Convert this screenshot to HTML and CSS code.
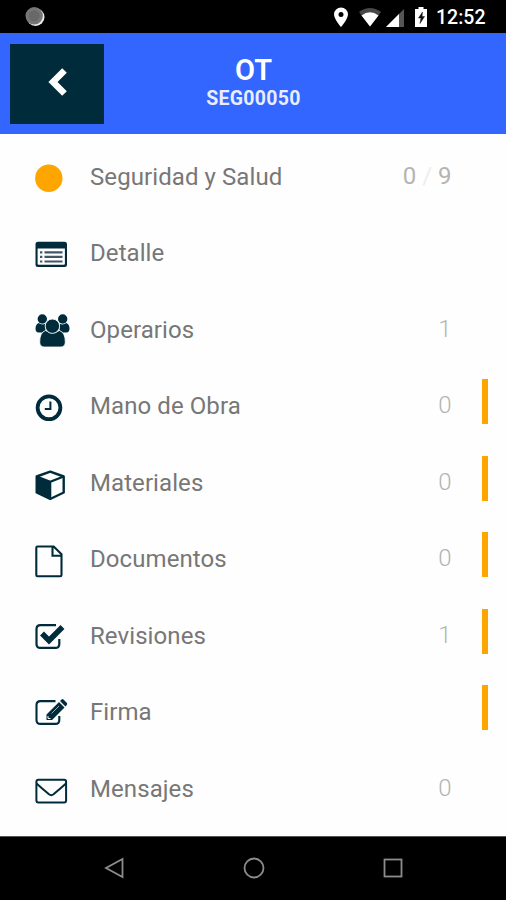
FILE: index.html
```html
<!DOCTYPE html>
<html lang="es">
<head>
    <meta charset="UTF-8">
    <meta name="viewport" content="width=device-width, initial-scale=1.0">
    <title>OT SEG00050</title>
    <link rel="stylesheet" href="styles.css">
</head>
<body>
    <div class="statusbar">
        <svg class="recording" width="22" height="22" viewBox="0 0 22 22">
            <circle cx="11.5" cy="11" r="9" fill="#eee"/>
            <circle cx="10.2" cy="9.8" r="8.7" fill="#777"/>
            <circle cx="10.2" cy="9.8" r="5.5" fill="#686868"/>
        </svg>
        <svg class="signals" width="98" height="24" viewBox="0 0 98 24">
            <path d="M8 2.5a7 7 0 0 0-7 7C1 14 8 22 8 22s7-8 7-12.500a7 7 0 0 0-7-7zm0 4.500a2.500 2.500 0 1 1 0 5 2.500 2.500 0 0 1 0-5z" fill="#fff"/>
            <path d="M26 7Q37-1 48 7L37 21.500z" fill="#484848"/>
            <path d="M28.500 10.500Q37 4 45.500 10.500L37 21.500z" fill="#fff"/>
            <path d="M71 4v18H53z" fill="#555"/>
            <path d="M66 9v13H53z" fill="#fff"/>
            <path d="M85.500 2h5v2h3.500v18H82V4h3.500z" fill="#fff"/>
            <path d="M89.500 7l-4 6h2.500l-1 5.500 4.500-7H89z" fill="#111" stroke="#111" stroke-width=".5"/>
        </svg>
        <span class="hora">12:52</span>
    </div>

    <header class="header">
        <button class="volver" aria-label="Volver">
            <svg width="24" height="32" viewBox="0 0 24 32">
                <path d="M19.500 4.500L8 16l11.500 11.500" fill="none" stroke="#fff" stroke-width="6.500"/>
            </svg>
        </button>
        <div class="titulo">
            <h1>OT</h1>
            <h2>SEG00050</h2>
        </div>
    </header>

    <main class="menu">
        <div class="fila">
            <svg class="icono" viewBox="0 0 36 40"><circle cx="13.800" cy="21.200" r="13.700" fill="#ffa500"/></svg>
            <span class="nombre">Seguridad y Salud</span>
            <span class="cantidad fuerte">0 <i>/</i> 9</span>
            <span class="marca"></span>
        </div>
        <div class="fila">
            <svg class="icono" viewBox="0 0 36 40">
                <path d="M3 7.800h26.500a2.500 2.500 0 0 1 2.500 2.500v20.200a2.500 2.500 0 0 1-2.500 2.500H3A2.500 2.500 0 0 1 .5 30.500V10.300A2.500 2.500 0 0 1 3 7.800zM2.600 14.500v15.200q0 1 1 1h25.300q1 0 1-1V14.500z" fill-rule="evenodd"/>
                <path d="M5 18.300h2.300M5 22.900h2.300M5 27.500h2.300M9.500 18.300h18M9.500 22.900h18M9.500 27.500h18" class="linea"/>
            </svg>
            <span class="nombre">Detalle</span>
            <span class="cantidad"></span>
            <span class="marca"></span>
        </div>
        <div class="fila">
            <svg class="icono" viewBox="0 0 36 40">
                <circle cx="7.300" cy="9" r="4.700"/>
                <circle cx="27.700" cy="9" r="4.700"/>
                <path d="M3.500 13q3.800 2.500 7 .5v7l-3 2H3Q.5 22 .5 18.500q0-4 3-5.500zM31.500 13q-3.800 2.500-7 .5v7l3 2H32q2.500-.5 2.500-4 0-4-3-5.500z"/>
                <path d="M10.500 20.500q7 4.500 14 0 5.800 2 5.800 11.500 0 5-4.800 5h-16q-4.800 0-4.800-5 0-9.500 5.800-11.500z" stroke="#fff" stroke-width=".8"/>
                <circle cx="17.400" cy="16.200" r="7.200" stroke="#fff" stroke-width=".9"/>
            </svg>
            <span class="nombre">Operarios</span>
            <span class="cantidad">1</span>
            <span class="marca"></span>
        </div>
        <div class="fila">
            <svg class="icono" viewBox="0 0 36 40">
                <circle cx="14" cy="20.800" r="11.400" class="trazo" stroke-width="3.800"/>
                <path d="M15.400 14.500v7.500H9.800" class="trazo" stroke-width="2"/>
            </svg>
            <span class="nombre">Mano de Obra</span>
            <span class="cantidad">0</span>
            <span class="marca activa"></span>
        </div>
        <div class="fila">
            <svg class="icono" viewBox="0 0 36 40">
                <path d="M15.200 8.600L28.700 13.500v16L15.200 36 1.700 29.500v-16z" class="trazo" stroke-width="2.400" stroke-linejoin="round"/>
                <path d="M1.700 13.500l13.500 5.200V36L1.700 29.500z"/>
                <path d="M1.700 13.500l13.500 5.200 13.500-5.200M15.200 18.700V36" class="trazo" stroke-width="2.200"/>
            </svg>
            <span class="nombre">Materiales</span>
            <span class="cantidad">0</span>
            <span class="marca activa"></span>
        </div>
        <div class="fila">
            <svg class="icono" viewBox="0 0 36 40">
                <path d="M2.500 6.500h16.200l7.800 7.800V35q0 1.300-1.300 1.300H2.500q-1.200 0-1.200-1.300V7.800q0-1.300 1.200-1.300zM17.500 6.500v9.300h9" class="trazo" stroke-width="2.100"/>
            </svg>
            <span class="nombre">Documentos</span>
            <span class="cantidad">0</span>
            <span class="marca activa"></span>
        </div>
        <div class="fila">
            <svg class="icono" viewBox="0 0 36 40">
                <path d="M21 9.100H5.500q-4 0-4 4v14.800q0 4 4 4h14.800q4 0 4-4v-5" class="trazo" stroke-width="2.200"/>
                <path d="M7 17.500l7 7L27.500 11" class="trazo" stroke-width="5.500"/>
            </svg>
            <span class="nombre">Revisiones</span>
            <span class="cantidad">1</span>
            <span class="marca activa"></span>
        </div>
        <div class="fila">
            <svg class="icono" viewBox="0 0 36 40">
                <path d="M20.500 8.100h-15q-4 0-4 4v14.800q0 4 4 4h14.800q4 0 4-4v-4" class="trazo" stroke-width="2.100"/>
                <path d="M11.500 21.500L24 9l5.500 5.500L17 27h-5.500zM25 8l1.300-1.300q1.200-1.200 2.400 0l3 3q1.200 1.200 0 2.400L30.500 13.500z"/>
                <path d="M13 23v2.500h2.500" fill="none" stroke="#fff" stroke-width="1"/>
                <path d="M16.500 20.500l7.500-7.500" fill="none" stroke="#9aabb3" stroke-width="1"/>
            </svg>
            <span class="nombre">Firma</span>
            <span class="cantidad"></span>
            <span class="marca activa"></span>
        </div>
        <div class="fila">
            <svg class="icono" viewBox="0 0 36 40">
                <rect x="1.400" y="10.700" width="29.700" height="22.800" rx="2" class="trazo" stroke-width="2"/>
                <path d="M1.500 14.500q5 4.500 12.500 10.800 2.250 1.800 4.500 0 7.500-6.300 12.500-10.800" class="trazo" stroke-width="2"/>
            </svg>
            <span class="nombre">Mensajes</span>
            <span class="cantidad">0</span>
            <span class="marca"></span>
        </div>
    </main>

    <nav class="navbar">
        <svg width="24" height="24" viewBox="0 0 24 24"><path d="M19.500 3v18L3 12z"/></svg>
        <svg width="24" height="24" viewBox="0 0 24 24"><circle cx="12" cy="12" r="9.500"/></svg>
        <svg width="24" height="24" viewBox="0 0 24 24"><rect x="3.500" y="3.500" width="17" height="17"/></svg>
    </nav>
</body>
</html>
```
FILE: styles.css
```css
* {
    box-sizing: border-box;
}
body {
    font-family: Roboto, sans-serif;
    margin: 0;
    height: 900px;
    display: flex;
    flex-direction: column;
    background-color: #fefefe;
    overflow: hidden;
}
.statusbar {
    height: 32.5px;
    flex: none;
    display: flex;
    align-items: center;
    background-color: #000;
    color: #fff;
    padding: 1px 21px 0 24px;
}
.signals {
    margin-left: auto;
    margin-top: 1px;
}
.hora {
    font-size: 19.5px;
    font-weight: 500;
    width: 49px;
    margin-left: 5px;
    margin-top: 2px;
}
.header {
    height: 101.5px;
    flex: none;
    display: grid;
    grid-template-columns: 94px 1fr 94px;
    padding: 11px 9px 10px 10px;
    background-color: #3366ff;
    color: #fff;
}
.volver {
    display: flex;
    align-items: center;
    justify-content: center;
    background-color: #002b3a;
    border: none;
    padding: 0 0 3px 0;
}
.titulo {
    text-align: center;
}
h1 {
    font-size: 29px;
    line-height: 34px;
    font-weight: 600;
    margin: 9px 0 0;
}
h2 {
    font-size: 19.5px;
    line-height: 24px;
    font-weight: 700;
    letter-spacing: 0.3px;
    margin: 0;
    color: #e8edff;
}
.menu {
    flex: 1;
    padding-top: 5px;
}
.fila {
    height: 76.5px;
    display: grid;
    grid-template-columns: 55px 1fr 80px 36px;
    align-items: center;
    padding: 0 18.5px 0 35px;
}
.icono {
    width: 36px;
    height: 40px;
    fill: #002b3a;
}
.trazo {
    fill: none;
    stroke: #002b3a;
}
.linea {
    stroke: #415768;
    stroke-width: 2.2;
}
.nombre {
    font-size: 24px;
    letter-spacing: 0.08px;
    color: #777;
    padding-bottom: 1px;
}
.cantidad {
    font-size: 24px;
    font-weight: 300;
    text-align: right;
    color: #b4b4b4;
    padding-bottom: 3px;
}
.cantidad.fuerte {
    font-weight: 400;
}
.cantidad i {
    font-style: normal;
    color: #eee;
}
.marca {
    width: 6px;
    height: 45px;
    margin-bottom: 10px;
    justify-self: end;
}
.marca.activa {
    background-color: #ffa500;
}
.navbar {
    height: 64px;
    flex: none;
    display: flex;
    align-items: center;
    justify-content: center;
    gap: 115px;
    background-color: #000;
    border-top: 1px solid #555;
    padding: 0 0 2px 1px;
}
.navbar svg {
    fill: none;
    stroke: #8c8c8c;
    stroke-width: 1.8;
}
```
